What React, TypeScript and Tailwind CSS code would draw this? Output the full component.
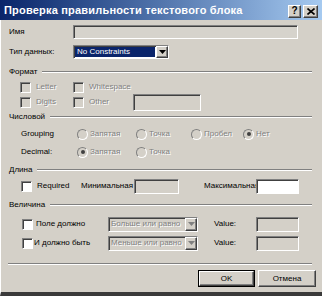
import React from 'react';

const sunken =
  'border border-t-[#808080] border-l-[#808080] border-b-white border-r-white shadow-[inset_1px_1px_0_#404040]';
const raised =
  'bg-[#d4d0c8] border border-t-white border-l-white border-b-[#404040] border-r-[#404040] shadow-[inset_-1px_-1px_0_#808080]';
const dim = 'text-[#808080] [text-shadow:1px_1px_0_#ffffff]';

const Arrow: React.FC<{ color?: string }> = ({ color = '#000' }) => (
  <svg width="7" height="4" viewBox="0 0 7 4">
    <path d="M0 0h7L3.5 4z" fill={color} />
  </svg>
);

const Check: React.FC<{ white?: boolean }> = ({ white }) => (
  <div className={`${sunken} w-[11px] h-[11px] shrink-0 ${white ? 'bg-white' : 'bg-[#d4d0c8]'}`} />
);

const Radio: React.FC<{ on?: boolean }> = ({ on }) => (
  <div className="w-[11px] h-[11px] shrink-0 rounded-full border border-t-[#808080] border-l-[#808080] border-b-white border-r-white bg-[#d4d0c8] flex items-center justify-center">
    {on && <div className="w-[4px] h-[4px] rounded-full bg-[#404040]" />}
  </div>
);

const Heading: React.FC<{ text: string; mt: string }> = ({ text, mt }) => (
  <div className={`flex items-center h-[14px] pl-[8px] pr-[10px] ${mt}`}>
    <span>{text}</span>
    <div className="flex-1 ml-[5px] border-t border-t-[#808080] border-b border-b-white" />
  </div>
);

const RadioItem: React.FC<{ label: string; on?: boolean; w: string }> = ({ label, on, w }) => (
  <div className={`flex items-center gap-[2px] ${w}`}>
    <Radio on={on} />
    <span className={dim}>{label}</span>
  </div>
);

const Combo: React.FC<{ text: string }> = ({ text }) => (
  <div className={`${sunken} w-[90px] h-[15px] bg-[#d4d0c8] flex items-center`}>
    <span className={`flex-1 pl-[2px] overflow-hidden whitespace-nowrap ${dim}`}>{text}</span>
    <div className={`${raised} w-[12px] h-[13px] shrink-0 flex items-center justify-center`}>
      <Arrow color="#808080" />
    </div>
  </div>
);

export default function App() {
  return (
    <div className="w-[322px] h-[296px] bg-[#d4d0c8] flex flex-col text-[8px] leading-none text-black font-['Liberation_Sans',Arial,sans-serif] overflow-hidden">
      <div className="h-[20px] shrink-0 flex items-center bg-gradient-to-r from-[#0a246a] to-[#a6caf0] pl-[4px] pr-[4px]">
        <span className="flex-1 text-white font-bold text-[11px] tracking-[0.2px] whitespace-nowrap">
          Проверка правильности текстового блока
        </span>
        <div className="flex gap-[2px] mt-[2px]">
          <div className={`${raised} w-[13px] h-[13px] flex items-center justify-center text-[10px] font-bold`}>?</div>
          <div className={`${raised} w-[15px] h-[13px] flex items-center justify-center`}>
            <svg width="8" height="7" viewBox="0 0 8 7">
              <path d="M0.5 0.5l7 6M7.5 0.5l-7 6" stroke="#000" strokeWidth="1.6" />
            </svg>
          </div>
        </div>
      </div>

      <div className="flex-1 flex flex-col border-l border-l-white border-b-[4px] border-b-[#3a3a3a]">
        <div className="flex items-center h-[16px] mt-[4px] pl-[8px]">
          <span className="w-[64px]">Имя</span>
          <div className={`${sunken} w-[225px] h-[14px] bg-[#d6d3cc]`} />
        </div>

        <div className="flex items-center h-[15px] mt-[4px] pl-[8px]">
          <span className="w-[64px]">Тип данных:</span>
          <div className={`${sunken} w-[96px] h-[14px] bg-white flex items-center`}>
            <span className="flex-1 h-[10px] mx-[1px] bg-[#0a246a] text-white pl-[2px] flex items-center">
              No Constraints
            </span>
            <div className={`${raised} w-[12px] h-[12px] flex items-center justify-center`}>
              <Arrow />
            </div>
          </div>
        </div>

        <Heading text="Формат" mt="mt-[6px]" />
        <div className="flex items-center h-[14px] mt-[1px] pl-[19px]">
          <div className="flex items-center gap-[5px] w-[53px]">
            <Check />
            <span className={dim}>Letter</span>
          </div>
          <div className="flex items-center gap-[5px]">
            <Check />
            <span className={dim}>Whitespace</span>
          </div>
        </div>
        <div className="flex items-center h-[14px] mt-[1px] pl-[19px]">
          <div className="flex items-center gap-[5px] w-[53px]">
            <Check />
            <span className={dim}>Digits</span>
          </div>
          <div className="flex items-center gap-[5px] w-[60px]">
            <Check />
            <span className={dim}>Other</span>
          </div>
          <div className={`${sunken} w-[68px] h-[17px] bg-[#d4d0c8]`} />
        </div>

        <Heading text="Числовой" mt="mt-[1px]" />
        <div className="flex items-center h-[14px] mt-[3px] pl-[20px]">
          <span className="w-[56px]">Grouping</span>
          <RadioItem label="Запятая" w="w-[59px]" />
          <RadioItem label="Точка" w="w-[55px]" />
          <RadioItem label="Пробел" w="w-[52px]" />
          <RadioItem label="Нет" on w="w-[50px]" />
        </div>
        <div className="flex items-center h-[14px] mt-[4px] pl-[20px]">
          <span className="w-[56px]">Decimal:</span>
          <RadioItem label="Запятая" on w="w-[59px]" />
          <RadioItem label="Точка" w="w-[55px]" />
        </div>

        <Heading text="Длина" mt="mt-[4px]" />
        <div className="flex items-center h-[16px] mt-[1px] pl-[20px]">
          <div className="flex items-center gap-[5px] w-[60px]">
            <Check white />
            <span>Required</span>
          </div>
          <span className="w-[53px] overflow-hidden whitespace-nowrap">Минимальная</span>
          <div className={`${sunken} w-[45px] h-[15px] bg-[#d4d0c8]`} />
          <span className="ml-[25px] w-[52px] overflow-hidden whitespace-nowrap">Максимальная</span>
          <div className={`${sunken} w-[43px] h-[15px] bg-white`} />
        </div>

        <Heading text="Величина" mt="mt-[4px]" />
        <div className="flex items-center h-[16px] mt-[4px] pl-[21px]">
          <div className="flex items-center gap-[3px] w-[86px]">
            <Check white />
            <span>Поле должно</span>
          </div>
          <Combo text="Больше или равно" />
          <span className="ml-[16px] w-[42px]">Value:</span>
          <div className={`${sunken} w-[43px] h-[15px] bg-[#d4d0c8]`} />
        </div>
        <div className="flex items-center h-[16px] mt-[3px] pl-[21px]">
          <div className="flex items-center gap-[1px] w-[86px]">
            <Check white />
            <span>И должно быть</span>
          </div>
          <Combo text="Меньше или равно" />
          <span className="ml-[16px] w-[42px]">Value:</span>
          <div className={`${sunken} w-[43px] h-[15px] bg-[#d4d0c8]`} />
        </div>

        <div className="mt-[12px] ml-[7px] w-[304px] border-t border-t-[#808080] border-b border-b-white" />

        <div className="flex justify-end gap-[3px] mt-[5px] pr-[6px]">
          <div className="border border-black">
            <div className={`${raised} w-[55px] h-[15px] flex items-center justify-center`}>OK</div>
          </div>
          <div className={`${raised} w-[58px] h-[17px] flex items-center justify-center`}>Отмена</div>
        </div>
      </div>
    </div>
  );
}
